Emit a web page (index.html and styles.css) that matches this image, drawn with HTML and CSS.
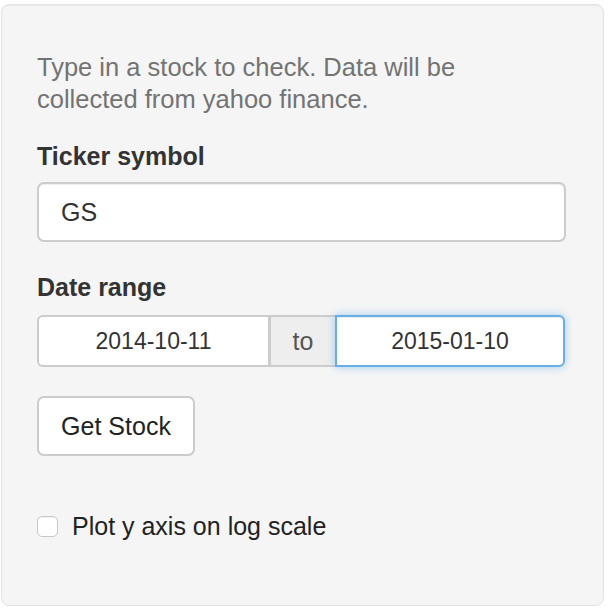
FILE: index.html
```html
<!DOCTYPE html>
<html>
<head>
<meta charset="utf-8">
<link rel="stylesheet" href="styles.css">
</head>
<body>
<div class="well">
  <p class="help">Type in a stock to check. Data will be collected from yahoo finance.</p>
  <label class="label label-ticker">Ticker symbol</label>
  <div class="input ticker">GS</div>
  <label class="label label-date">Date range</label>
  <div class="daterange">
    <div class="date date-left">2014-10-11</div>
    <div class="addon">to</div>
    <div class="date date-right">2015-01-10</div>
  </div>
  <button class="btn">Get Stock</button>
  <div class="check">
    <span class="box"></span>
    <span class="check-label">Plot y axis on log scale</span>
  </div>
</div>
</body>
</html>
```

FILE: styles.css
```css
html, body {
  margin: 0;
  padding: 0;
  background: #ffffff;
}
body {
  font-family: "Liberation Sans", Arial, sans-serif;
  color: #333333;
}
.well {
  box-sizing: border-box;
  margin: 4px 0 0 1px;
  width: 603px;
  height: 602px;
  background: #f5f5f5;
  border: 1px solid #e3e3e3;
  border-radius: 8px;
  box-shadow: inset 0 1px 1px rgba(0,0,0,0.05);
  padding: 46px 38px 0 35px;
  display: flex;
  flex-direction: column;
  align-items: flex-start;
}
.help {
  margin: 0;
  width: 470px;
  font-size: 25.5px;
  line-height: 32px;
  color: #737373;
}
.label {
  display: block;
  font-size: 25px;
  line-height: 32px;
  font-weight: bold;
  color: #333333;
}
.label-ticker { margin-top: 25px; }
.label-date { margin-top: 29px; }
.input {
  box-sizing: border-box;
  margin-top: 10px;
  width: 529px;
  height: 60px;
  background: #fff;
  border: 2px solid #cccccc;
  border-radius: 7px;
  box-shadow: inset 0 1px 1px rgba(0,0,0,0.075);
  padding: 0 22px;
  display: flex;
  align-items: center;
  font-size: 25px;
  color: #333333;
}
.daterange {
  margin-top: 12px;
  display: flex;
  width: 528px;
  height: 52px;
  flex-shrink: 0;
}
.date, .addon {
  box-sizing: border-box;
  height: 52px;
  display: flex;
  align-items: center;
  justify-content: center;
  font-size: 23px;
  color: #333;
  border: 2px solid #cccccc;
}
.date-left {
  width: 231px;
  background: #fff;
  border-radius: 6px 0 0 6px;
  border-right-width: 0;
}
.addon {
  width: 67px;
  background: #eeeeee;
  font-size: 25px;
  color: #555;
  border-left-width: 3px;
  border-right-width: 0;
}
.date-right {
  width: 230px;
  background: #fff;
  border-color: #66afe9;
  border-radius: 0 6px 6px 0;
  box-shadow: inset 0 1px 1px rgba(0,0,0,0.075), 0 0 8px rgba(102,175,233,0.6);
}
.btn {
  box-sizing: border-box;
  margin-top: 29px;
  width: 158px;
  height: 60px;
  flex-shrink: 0;
  background: #fff;
  border: 2px solid #cccccc;
  border-radius: 7px;
  font-family: "Liberation Sans", Arial, sans-serif;
  font-size: 25px;
  color: #222;
  padding: 0;
}
.check {
  margin-top: 59px;
  display: flex;
  align-items: center;
  height: 22px;
}
.box {
  box-sizing: border-box;
  width: 21px;
  height: 21px;
  border: 1.5px solid #c8c8c8;
  border-radius: 5px;
  background: #fff;
  box-shadow: inset 0 1px 1px rgba(0,0,0,0.05);
}
.check-label {
  margin-left: 14px;
  font-size: 25px;
  color: #222;
}
```
